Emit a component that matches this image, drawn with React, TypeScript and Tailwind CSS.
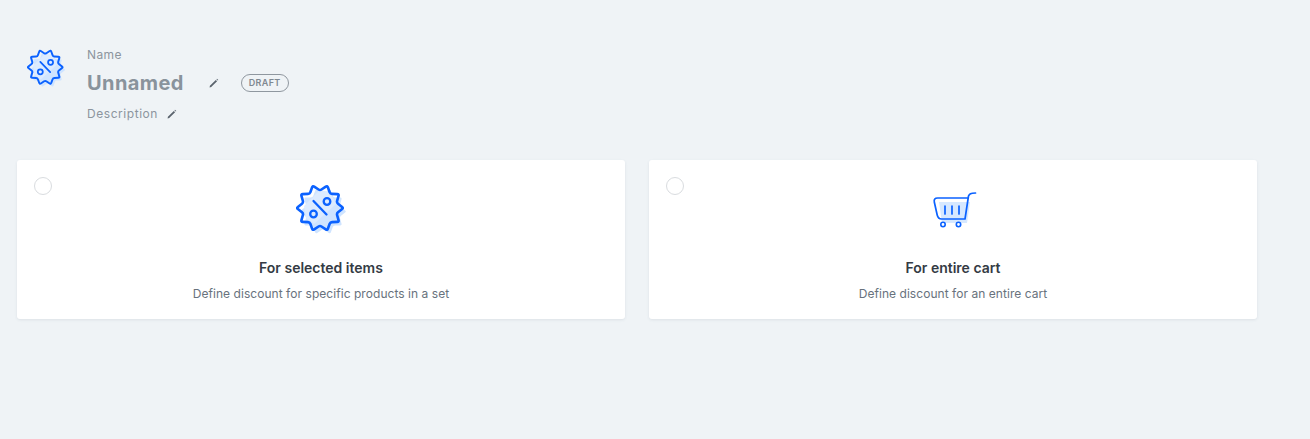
const starPath = (() => {
  const tips = 10
  const pts: [number, number][] = []
  for (let i = 0; i < tips * 2; i++) {
    const r = i % 2 === 0 ? 23.5 : 17.5
    const a = (Math.PI * i) / tips - Math.PI / 2 + Math.PI / 10
    pts.push([24 + r * Math.cos(a), 24 + r * Math.sin(a)])
  }
  const lerp = (p: [number, number], q: [number, number], t: number) =>
    `${(p[0] + (q[0] - p[0]) * t).toFixed(2)} ${(p[1] + (q[1] - p[1]) * t).toFixed(2)}`
  let d = ''
  pts.forEach((p, i) => {
    const prev = pts[(i + pts.length - 1) % pts.length]
    const next = pts[(i + 1) % pts.length]
    d += `${i === 0 ? 'M' : 'L'}${lerp(p, prev, 0.2)} Q${p[0].toFixed(2)} ${p[1].toFixed(2)} ${lerp(p, next, 0.2)} `
  })
  return d + 'Z'
})()

const DiscountIcon = ({ className }: { className: string }) => (
  <svg viewBox="0 0 50 50" fill="none" className={className}>
    <path d={starPath} fill="#cfe4ff" transform="translate(3 3.5)" />
    <path d="M24 6 L8 22 L10 34 L18 40 L40 20 L34 8 Z" fill="#dcebff" />
    <path d={starPath} stroke="#0b62ff" strokeWidth="2.6" strokeLinejoin="round" />
    <circle cx="31" cy="17.5" r="3.3" stroke="#0b62ff" strokeWidth="2.3" />
    <circle cx="17.5" cy="30" r="3.3" stroke="#0b62ff" strokeWidth="2.3" />
    <path d="M17.5 17 L30.5 30.5" stroke="#0b62ff" strokeWidth="2.3" strokeLinecap="round" />
  </svg>
)

const CartIcon = () => (
  <svg viewBox="0 0 46 38" fill="none" className="w-[46px] h-[38px] ml-[4px] mt-[6px]">
    <path d="M7 10 H38 L35 31 H10 Z" fill="#d6e8ff" />
    <path d="M36.5 4 C37.5 1.8 38.5 1 43.5 1 M36.5 4 L33 27 H9.5 C7 27 5.8 25.5 5.2 23 L2.3 10 C1.8 7.5 3 6 5.5 6 H36" stroke="#0b62ff" strokeWidth="1.7" strokeLinecap="round" strokeLinejoin="round" />
    <path d="M13 14 V22 M20 14 V22 M27 14 V22" stroke="#0b62ff" strokeWidth="1.7" strokeLinecap="round" />
    <circle cx="11" cy="32.5" r="2.2" stroke="#0b62ff" strokeWidth="1.6" />
    <circle cx="26.5" cy="32.5" r="2.2" stroke="#0b62ff" strokeWidth="1.6" />
  </svg>
)

const Pencil = () => (
  <svg viewBox="0 0 10 10" className="w-2.5 h-2.5">
    <path d="M0.6 9.4 L0.9 7.8 L6.8 1.9 L8.1 3.2 L2.2 9.1 Z M7.4 1.3 L8 0.7 L9.3 2 L8.7 2.6 Z" fill="#5a636d" />
  </svg>
)

const OptionCard = ({ icon, title, text }: { icon: React.ReactNode; title: string; text: string }) => (
  <div className="relative w-[608px] h-[159px] bg-white rounded-[3px] shadow-[0_1px_3px_rgba(60,75,95,0.1)] flex flex-col items-center pt-6">
    <div className="absolute top-[17px] left-[17px] w-[18px] h-[18px] rounded-full border border-[#d9dcdf]" />
    <div className="h-[48px] flex items-center justify-center">{icon}</div>
    <div className="mt-[26px] text-sm leading-5 font-semibold text-[#343b44]">{title}</div>
    <div className="mt-[6px] text-xs leading-5 tracking-[0.05px] text-[#68727d]">{text}</div>
  </div>
)

export default function App() {
  return (
    <div className="h-[439px] bg-[#eff3f6] font-['Inter',sans-serif] overflow-hidden pt-[47px] pl-[17px]">
      <div className="flex h-[113px]">
        <div className="w-[70px] pl-[10px] pt-[2px]">
          <DiscountIcon className="w-[38px] h-[38px]" />
        </div>
        <div>
          <div className="text-xs leading-4 tracking-[0.4px] text-[#8c959e]">Name</div>
          <div className="flex items-center mt-[8px] h-6">
            <span className="text-xl leading-6 font-bold tracking-[0.4px] text-[#89939c]">Unnamed</span>
            <span className="ml-[25px]"><Pencil /></span>
            <span className="ml-[22px] h-[18px] px-[7px] rounded-full border border-[#8f979f] text-[9px] font-semibold leading-4 tracking-[0.35px] text-[#7f8891]">DRAFT</span>
          </div>
          <div className="flex items-center mt-[9px] h-5">
            <span className="text-xs leading-5 tracking-[0.55px] text-[#8c959e]">Description</span>
            <span className="ml-[9px]"><Pencil /></span>
          </div>
        </div>
      </div>
      <div className="flex gap-6">
        <OptionCard icon={<DiscountIcon className="w-[50px] h-[50px] mt-[2px]" />} title="For selected items" text="Define discount for specific products in a set" />
        <OptionCard icon={<CartIcon />} title="For entire cart" text="Define discount for an entire cart" />
      </div>
    </div>
  )
}
